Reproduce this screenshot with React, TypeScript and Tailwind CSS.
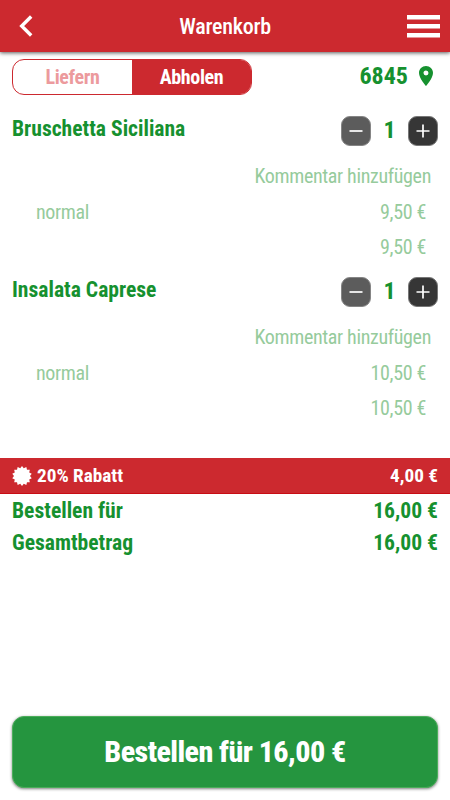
import React from "react";

type Item = { name: string; option: string; price: string };

const items: Item[] = [
  { name: "Bruschetta Siciliana", option: "normal", price: "9,50 €" },
  { name: "Insalata Caprese", option: "normal", price: "10,50 €" },
];

function Badge() {
  const points = Array.from({ length: 28 }, (_, i) => {
    const radius = i % 2 === 0 ? 10 : 8;
    const angle = (i * Math.PI) / 14;
    return `${10 + radius * Math.sin(angle)},${10 - radius * Math.cos(angle)}`;
  }).join(" ");
  return (
    <svg className="-mt-px size-5" viewBox="0 0 20 20" fill="#fff">
      <polygon points={points} />
    </svg>
  );
}

function CartItem({ item }: { item: Item }) {
  return (
    <section className="h-[161px]">
      <div className="flex h-[51px] items-center justify-between pl-3 pr-3">
        <h2 className="pb-[3px] text-[21.6px] font-bold leading-6">{item.name}</h2>
        <div className="flex items-center">
          <button className="flex size-[30px] items-center justify-center rounded-[9px] border border-[#858585] bg-[#5c5c5c]">
            <svg className="size-[14px]" viewBox="0 0 14 14" stroke="#fff" strokeWidth="1.7"><path d="M.5 7h13" /></svg>
          </button>
          <span className="w-[37px] pb-0.5 text-center text-[24px] font-bold leading-6">1</span>
          <button className="flex size-[30px] items-center justify-center rounded-[9px] border border-[#777] bg-[#363636]">
            <svg className="size-[14px]" viewBox="0 0 14 14" stroke="#fff" strokeWidth="1.7"><path d="M.5 7h13M7 .5v13" /></svg>
          </button>
        </div>
      </div>
      <div className="text-[20px] leading-6 tracking-[-0.34px] text-[#96cb9c]">
        <div className="flex h-10 items-center justify-end pr-[19px]">Kommentar hinzufügen</div>
        <div className="flex h-8 items-center justify-between pl-9 pr-6"><span>{item.option}</span><span>{item.price}</span></div>
        <div className="flex h-[38px] items-center justify-end pr-6">{item.price}</div>
      </div>
    </section>
  );
}

export default function App() {
  return (
    <main className="flex h-[800px] w-[450px] flex-col overflow-hidden bg-white font-['Roboto_Condensed',Roboto,sans-serif] font-stretch-condensed text-[#16912f]">
      <header className="flex h-[52px] shrink-0 items-center justify-between bg-[#cc292f] pl-[19px] pr-[10px] shadow-[0_1px_4px_rgba(0,0,0,.65)]">
        <svg className="h-[22px] w-[14px]" viewBox="0 0 14 22" fill="none" stroke="#fff" strokeWidth="3.4"><path d="M12.2 1.5L2.7 11L12.2 20.5" /></svg>
        <h1 className="ml-[10px] mt-0.5 text-[22px] font-medium leading-6 tracking-[-0.25px] text-white">Warenkorb</h1>
        <svg className="h-[24px] w-[33px]" viewBox="0 0 33 24" fill="#fff"><path d="M0 1h33v4.500H0zM0 10h33v4.500H0zM0 19h33v4.500H0z" /></svg>
      </header>
      <div className="flex h-[53px] shrink-0 items-start justify-between pl-3 pr-4 pt-[7px]">
        <div className="flex h-9 w-60 overflow-hidden rounded-[12px] border border-[#cc292f] text-[20px] font-bold tracking-[-0.35px]">
          <button className="w-[119px] text-[#ec9a9d]">Liefern</button>
          <button className="flex-1 bg-[#cc292f] text-white">Abholen</button>
        </div>
        <div className="flex h-[34px] items-center">
          <span className="text-[24px] font-bold">6845</span>
          <svg className="ml-[11px] mr-px h-5 w-[14px]" viewBox="5 2 14 20" fill="currentColor"><path d="M12 2C8.13 2 5 5.13 5 9c0 5.25 7 13 7 13s7-7.75 7-13c0-3.87-3.13-7-7-7zm0 9.5a2.5 2.5 0 0 1 0-5 2.5 2.5 0 0 1 0 5z" /></svg>
        </div>
      </div>
      {items.map((item) => <CartItem key={item.name} item={item} />)}
      <div className="mt-[31px] flex h-9 shrink-0 items-center justify-between border-b border-[#c80c14] bg-[#cc292f] pl-3 pr-3 pt-0.5 text-[19.2px] font-bold text-white">
        <div className="flex items-center gap-[5px]"><Badge /><span>20% Rabatt</span></div>
        <span>4,00 €</span>
      </div>
      <div className="pt-px text-[21.6px] font-bold leading-8">
        <div className="flex justify-between px-3"><span>Bestellen für</span><span>16,00 €</span></div>
        <div className="flex justify-between px-3"><span>Gesamtbetrag</span><span>16,00 €</span></div>
      </div>
      <button className="mx-3 mb-3 mt-auto h-[72px] shrink-0 rounded-[12px] border border-[#4bad5a] bg-[#25953f] pb-0.5 text-[30px] font-extrabold tracking-[-0.55px] text-white shadow-[0_1px_3px_rgba(0,0,0,.5)]">Bestellen für 16,00 €</button>
    </main>
  );
}
